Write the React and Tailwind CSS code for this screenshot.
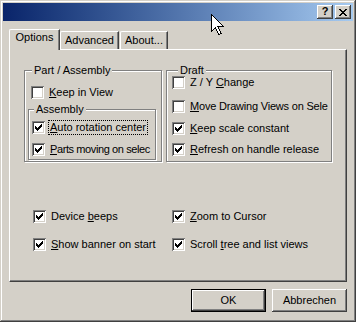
import React from 'react';

const raised =
  'shadow-[inset_-1px_-1px_#404040,inset_1px_1px_#ffffff,inset_-2px_-2px_#808080,inset_2px_2px_#d4d0c8]';

const Box = ({ checked }) => (
  <span className="relative block w-[13px] h-[13px] shrink-0 bg-white shadow-[inset_1px_1px_#808080,inset_-1px_-1px_#ffffff,inset_2px_2px_#404040,inset_-2px_-2px_#d4d0c8]">
    {checked && (
      <svg className="absolute inset-0" width="13" height="13" viewBox="0 0 13 13" shapeRendering="crispEdges">
        <path d="M3 5h1v3H3zM4 6h1v3H4zM5 7h1v3H5zM6 6h1v3H6zM7 5h1v3H7zM8 4h1v3H8zM9 3h1v3H9z" fill="#000" />
      </svg>
    )}
  </span>
);

const Check = ({ checked, children, focus, className = '' }) => (
  <div className={`flex items-center gap-[5px] h-[15px] whitespace-nowrap ${className}`}>
    <Box checked={checked} />
    {focus ? (
      <span className="-ml-[2px] pl-px pr-px leading-[13px] border border-dotted border-black">{children}</span>
    ) : (
      <span className="leading-[13px]">{children}</span>
    )}
  </div>
);

const Group = ({ label, legendClass, className = '', children }) => (
  <fieldset className={`border border-[#808080] shadow-[1px_1px_0_#ffffff,inset_1px_1px_0_#ffffff] ${className}`}>
    <legend className={`px-[2px] leading-[13px] bg-[#d4d0c8] ${legendClass}`}>{label}</legend>
    {children}
  </fieldset>
);

const Key = ({ children }) => <span className="underline underline-offset-[1px]">{children}</span>;

export default function App() {
  return (
    <div className="relative w-[356px] h-[322px] p-[3px] bg-[#d4d0c8] text-[11px] text-black font-['Liberation_Sans',Arial,sans-serif] shadow-[inset_-1px_-1px_#404040,inset_1px_1px_#d4d0c8,inset_-2px_-2px_#808080,inset_2px_2px_#ffffff] select-none">
      {/* title bar */}
      <div className="h-[18px] flex justify-end items-start gap-[2px] pt-[2px] pr-[2px] bg-linear-to-r from-[#0a246a] to-[#a6caf0]">
        <div className={`w-[16px] h-[14px] bg-[#d4d0c8] ${raised} flex items-center justify-center font-bold text-[11px] leading-none pb-px`}>?</div>
        <div className={`w-[16px] h-[14px] bg-[#d4d0c8] ${raised} flex items-center justify-center`}>
          <svg width="8" height="7" viewBox="0 0 8 7" shapeRendering="crispEdges">
            <path d="M0 0h2v1H0zM6 0h2v1H6zM1 1h2v1H1zM5 1h2v1H5zM2 2h4v1H2zM3 3h2v1H3zM2 4h4v1H2zM1 5h2v1H1zM5 5h2v1H5zM0 6h2v1H0zM6 6h2v1H6z" fill="#000" />
          </svg>
        </div>
      </div>

      <div className="px-[6px] pt-[8px]">
        {/* tabs */}
        <div className="flex items-end h-[20px]">
          <div className="relative z-10 -mb-px w-[51px] h-[21px] pt-[1px] text-center leading-[13px] bg-[#d4d0c8] border-t border-l border-white border-r border-r-[#404040] shadow-[inset_-1px_0_#808080] rounded-tl-[2px]">
            Options
          </div>
          <div className="w-[59px] h-[18px] pt-[2px] text-center leading-[13px] border-t border-l border-white border-r border-r-[#404040] shadow-[inset_-1px_0_#808080] rounded-tl-[2px]">
            Advanced
          </div>
          <div className="ml-px w-[48px] h-[18px] pt-[2px] text-center leading-[13px] border-t border-l border-white border-r border-r-[#404040] shadow-[inset_-1px_0_#808080] rounded-tl-[2px]">
            About...
          </div>
        </div>

        {/* tab page */}
        <div className="w-[338px] h-[233px] pt-[14px] pl-[14px] border-t border-l border-white border-r border-b border-r-[#404040] border-b-[#404040] shadow-[inset_-1px_-1px_#808080]">
          <div className="flex gap-[4px]">
            <Group label="Part / Assembly" legendClass="ml-[4px]" className="w-[138px] h-[98px] pl-[3px]">
              <Check className="mt-[8px] ml-[3px]">
                <Key>K</Key>eep in View
              </Check>
              <Group label="Assembly" legendClass="ml-[2px]" className="mt-[3px] w-[128px] h-[57px] pl-[3px]">
                <Check checked focus className="mt-[4px]">
                  <Key>A</Key>uto rotation center
                </Check>
                <Check checked className="mt-[7px] tracking-[-0.4px]">
                  <Key>P</Key>arts moving on selec
                </Check>
              </Group>
            </Group>
            <Group label="Draft" legendClass="ml-[6px]" className="w-[166px] h-[98px] pl-[5px]">
              <Check className="-mt-[2px]">
                Z / Y <Key>C</Key>hange
              </Check>
              <Check className="mt-[9px] tracking-[-0.2px]">
                <Key>M</Key>ove Drawing Views on Sele
              </Check>
              <Check checked className="mt-[7px]">
                <Key>K</Key>eep scale constant
              </Check>
              <Check checked className="mt-[6px]">
                <Key>R</Key>efresh on handle release
              </Check>
            </Group>
          </div>

          <div className="mt-[47px] ml-[9px] grid grid-cols-[139px_150px] gap-y-[13px]">
            <Check checked>
              Device <Key>b</Key>eeps
            </Check>
            <Check checked>
              <Key>Z</Key>oom to Cursor
            </Check>
            <Check checked>
              <Key>S</Key>how banner on start
            </Check>
            <Check checked>
              Scroll <Key>t</Key>ree and list views
            </Check>
          </div>
        </div>

        {/* buttons */}
        <div className="mt-[7px] flex justify-end gap-[6px]">
          <button className="w-[75px] h-[23px] border border-black bg-[#d4d0c8] shadow-[inset_-1px_-1px_#404040,inset_1px_1px_#ffffff,inset_-2px_-2px_#808080] leading-[13px]">
            OK
          </button>
          <button className={`w-[75px] h-[23px] bg-[#d4d0c8] ${raised} leading-[13px]`}>Abbrechen</button>
        </div>
      </div>

      {/* mouse pointer */}
      <svg className="absolute left-[211px] top-[14px]" width="13" height="21" viewBox="0 0 13 21" shapeRendering="crispEdges">
        <path d="M0.5 0.5V17.5L4.5 13.5L7.5 20.5L10 19.5L7 12.5H12.5Z" fill="#fff" stroke="#000" strokeWidth="1" strokeLinejoin="miter" />
      </svg>
    </div>
  );
}
